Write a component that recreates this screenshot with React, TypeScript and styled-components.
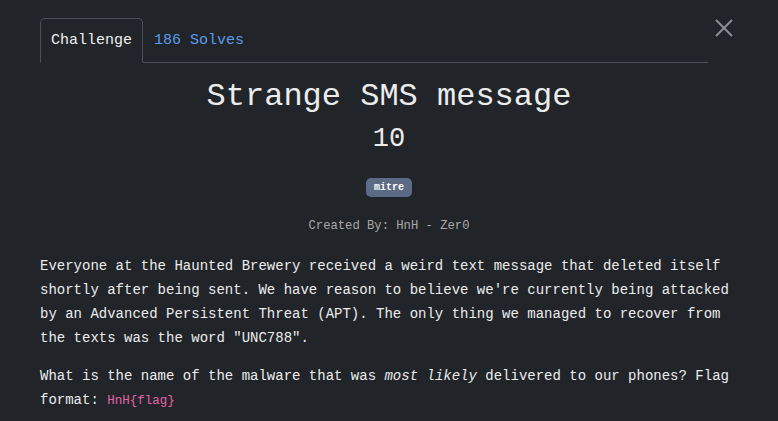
import React from "react";
import styled, { createGlobalStyle } from "styled-components";

const Global = createGlobalStyle`
  html, body { margin: 0; padding: 0; background: #212429; }
  body { font-family: "Liberation Mono", "DejaVu Sans Mono", monospace; color: #e6e6e6; }
`;

const Page = styled.div`
  width: 778px;
  height: 421px;
  box-sizing: border-box;
  padding: 18px 40px 0 40px;
  overflow: hidden;
  position: relative;
`;

const TabBar = styled.div`
  display: flex;
  align-items: flex-end;
  width: 668px;
  height: 44px;
  border-bottom: 1px solid #4b4f56;
`;

const Tab = styled.div<{ $active?: boolean }>`
  box-sizing: border-box;
  height: ${(p) => (p.$active ? "45px" : "44px")};
  margin-bottom: ${(p) => (p.$active ? "-1px" : "0")};
  padding: 0 10px;
  display: flex;
  align-items: center;
  font-size: 15px;
  color: ${(p) => (p.$active ? "#f0f0f0" : "#5b9bec")};
  background: #212429;
  border: 1px solid ${(p) => (p.$active ? "#4b4f56" : "transparent")};
  border-bottom-color: ${(p) => (p.$active ? "#212429" : "transparent")};
  border-radius: 5px 5px 0 0;
`;

const Close = styled.button`
  position: absolute;
  top: 17px;
  right: 43px;
  width: 22px;
  height: 22px;
  padding: 0;
  border: none;
  background: transparent;
  display: flex;
  align-items: center;
  justify-content: center;
`;

const Header = styled.div`
  display: flex;
  flex-direction: column;
  align-items: center;
  width: 698px;
`;

const Title = styled.h1`
  margin: 14px 0 0 0;
  font-size: 32px;
  font-weight: normal;
  line-height: 40px;
  color: #ececec;
`;

const Points = styled.div`
  font-size: 27px;
  line-height: 34px;
  margin-top: 5px;
  color: #ececec;
`;

const Badge = styled.span`
  margin-top: 22px;
  background: #5b6b85;
  color: #ffffff;
  font-size: 10px;
  font-weight: bold;
  line-height: 19px;
  padding: 0 8px;
  border-radius: 5px;
`;

const Author = styled.div`
  margin-top: 21px;
  font-size: 12.2px;
  line-height: 16px;
  color: #a9a9a9;
`;

const Body = styled.div`
  width: 698px;
  margin-top: 20px;
  font-size: 14px;
  line-height: 24px;
  color: #ececec;
`;

const Para = styled.p`
  margin: 0 0 14px 0;
`;

const Code = styled.code`
  font-family: inherit;
  font-size: 12.5px;
  line-height: 16px;
  color: #e464a5;
`;

export default function App() {
  return (
    <>
      <Global />
      <Page>
        <TabBar>
          <Tab $active>Challenge</Tab>
          <Tab>186 Solves</Tab>
        </TabBar>
        <Close aria-label="Close">
          <svg width="18" height="18" viewBox="0 0 18 18">
            <path d="M1 1 L17 17 M17 1 L1 17" stroke="#8b8e93" strokeWidth="2" />
          </svg>
        </Close>
        <Header>
          <Title>Strange SMS message</Title>
          <Points>10</Points>
          <Badge>mitre</Badge>
          <Author>Created By: HnH - Zer0</Author>
        </Header>
        <Body>
          <Para>
            Everyone at the Haunted Brewery received a weird text message that deleted itself
            shortly after being sent. We have reason to believe we're currently being attacked
            by an Advanced Persistent Threat (APT). The only thing we managed to recover from
            the texts was the word "UNC788".
          </Para>
          <Para>
            What is the name of the malware that was <em>most likely</em> delivered to our phones? Flag
            format: <Code>HnH{"{flag}"}</Code>
          </Para>
        </Body>
      </Page>
    </>
  );
}
